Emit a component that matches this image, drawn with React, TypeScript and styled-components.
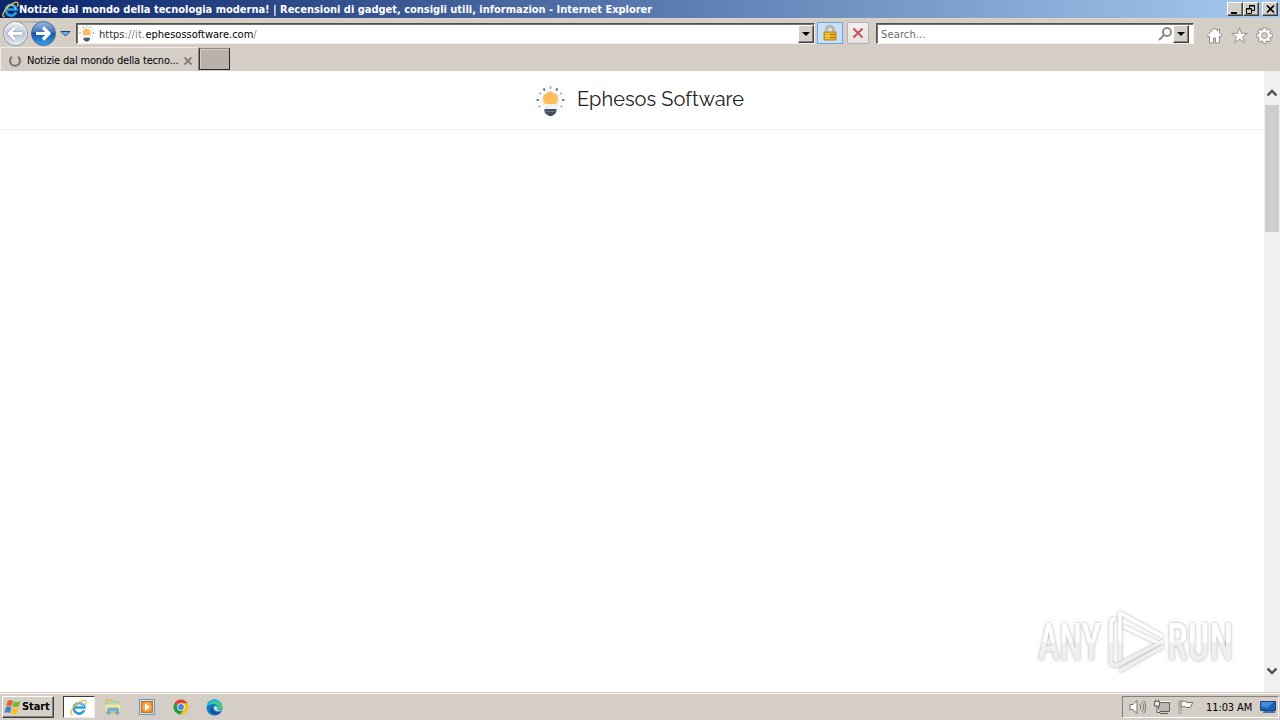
import React from "react";
import styled, { createGlobalStyle, css } from "styled-components";

const GlobalStyle = createGlobalStyle`
  html, body { margin: 0; padding: 0; overflow: hidden; background: #fff; }
  * { box-sizing: border-box; }
  svg { display: block; flex: none; }
`;

const raised = css`
  background: #d4d0c8;
  border: 1px solid;
  border-color: #fff #404040 #404040 #fff;
  box-shadow: inset -1px -1px 0 #85817b;
`;

const Screen = styled.div`
  width: 1280px;
  height: 720px;
  display: flex;
  flex-direction: column;
  background: #d5cec7;
  color: #000;
  font-family: "DejaVu Sans Condensed", "DejaVu Sans", sans-serif;
  font-stretch: condensed;
  font-size: 11px;
  overflow: hidden;
`;

const Label = styled.span<{ $spacing?: number; $bold?: boolean; $color?: string }>`
  white-space: pre;
  line-height: 14px;
  font-size: 11px;
  font-weight: ${(p) => (p.$bold ? 700 : 400)};
  letter-spacing: ${(p) => p.$spacing ?? 0}px;
  color: ${(p) => p.$color ?? "#000"};
`;

const TitleBar = styled.header`
  height: 18px;
  flex: none;
  display: flex;
  align-items: center;
  padding: 0 2px;
  background: linear-gradient(90deg, #0a246a, #a6caf0);
`;

const TitleText = styled(Label)`
  padding-top: 1px;
`;

const WindowButtons = styled.div`
  margin-left: auto;
  display: flex;
  align-items: center;
`;

const WindowButton = styled.button<{ $gap?: number }>`
  ${raised}
  width: 16px;
  height: 14px;
  padding: 0;
  margin-left: ${(p) => p.$gap ?? 0}px;
  display: flex;
  align-items: center;
  justify-content: center;
`;

const NavBar = styled.nav`
  height: 29px;
  flex: none;
  display: flex;
  align-items: flex-start;
  padding: 4px 6px 0 1px;
  border-top: 1px solid #d8d5c5;
`;

const History = styled.div`
  width: 75px;
  height: 26px;
  margin-top: -2px;
  flex: none;
`;

const Field = styled.div<{ $width: number }>`
  width: ${(p) => p.$width}px;
  height: 21px;
  flex: none;
  display: flex;
  align-items: center;
  padding-left: 2px;
  background: #fff;
  border: 1px solid;
  border-color: #55504c #f4f1ee #f4f1ee #55504c;
  box-shadow: inset 1px 1px 0 #77716c;
`;

const FieldText = styled.div<{ $indent: number }>`
  flex: 1;
  padding: 2px 0 0 ${(p) => p.$indent}px;
  display: flex;
`;

const DropButton = styled.button<{ $end?: number }>`
  ${raised}
  width: 16px;
  height: 18px;
  padding: 0;
  margin-right: ${(p) => p.$end ?? 0}px;
  display: flex;
  align-items: center;
  justify-content: center;
`;

const LockButton = styled.button`
  width: 26px;
  height: 22px;
  margin: -1px 0 0 2px;
  padding: 0;
  display: flex;
  align-items: center;
  justify-content: center;
  background: #c8e0fb;
  border: 1px solid #6ca6e0;
`;

const StopButton = styled(LockButton)`
  width: 22px;
  margin: -1px 7px 0 4px;
  background: linear-gradient(#f3f0f1, #e6e2e4);
  border: 1px solid #b8b1b3;
  border-radius: 2px;
`;

const Tools = styled.div`
  display: flex;
  gap: 8px;
  padding: 4px 0 0 12px;
`;

const TabBar = styled.div`
  height: 24px;
  flex: none;
  display: flex;
  align-items: flex-start;
`;

const Tab = styled.div`
  width: 199px;
  height: 24px;
  display: flex;
  align-items: center;
  padding: 2px 6px 0 8px;
  border-top: 1px solid #eeebe8;
  border-left: 1px solid #eeebe8;
  border-right: 1px solid #8c847d;
`;

const TabText = styled.div`
  flex: 1;
  padding-left: 6px;
  display: flex;
`;

const NewTab = styled.button`
  width: 31px;
  height: 22px;
  margin: 1px 0 0;
  padding: 0;
  background: #b9b1ab;
  border: 1px solid;
  border-color: #8e8680 #2b2825 #2b2825 #39322e;
  box-shadow: inset 1px 1px 0 #d5cec7;
`;

const Viewport = styled.main`
  height: 621px;
  flex: none;
  display: flex;
  background: #fff;
`;

const Page = styled.div`
  position: relative;
  width: 1264px;
`;

const SiteHeader = styled.div`
  height: 59px;
  margin-left: 1px;
  display: flex;
  align-items: flex-start;
  padding: 14px 0 0 535px;
  border-bottom: 1px solid #f0f0f0;
`;

const SiteName = styled.h1`
  margin: 0 0 0 11px;
  font-family: Raleway, Lato, sans-serif;
  font-size: 20px;
  line-height: 28px;
  font-weight: 400;
  letter-spacing: 0.03px;
  color: #222;
  white-space: nowrap;
`;

const Watermark = styled.div`
  position: absolute;
  right: 22px;
  bottom: 12px;
`;

const ScrollBar = styled.div`
  width: 16px;
  display: flex;
  flex-direction: column;
  align-items: center;
  justify-content: space-between;
  background: #f0f0f0;
  padding: 18px 0 17px;
`;

const Thumb = styled.div`
  width: 14px;
  height: 127px;
  margin: 8px 0 auto;
  background: #cdcdcd;
`;

const TaskBar = styled.footer`
  height: 28px;
  flex: none;
  display: flex;
  align-items: flex-start;
  padding: 3px 1px 0 2px;
  border-top: 1px solid #d5cec7;
  box-shadow: inset 0 1px 0 #f7f5f3;
`;

const StartButton = styled.button`
  ${raised}
  width: 52px;
  height: 22px;
  padding: 0 0 0 1px;
  display: flex;
  align-items: center;
  font-family: inherit;
`;

const TaskItem = styled.button<{ $active?: boolean }>`
  width: 32px;
  height: 22px;
  margin-right: 2px;
  padding: 0 1px 0 0;
  display: flex;
  align-items: center;
  justify-content: center;
  background: ${(p) => (p.$active ? "#fff" : "transparent")};
  border: 1px solid;
  border-color: ${(p) => (p.$active ? "#403c38 #eee #eee #403c38" : "transparent")};
`;

const TaskItems = styled.div`
  display: flex;
  margin-left: 9px;
`;

const Tray = styled.div`
  width: 157px;
  height: 22px;
  margin-left: auto;
  display: flex;
  align-items: center;
  padding-left: 6px;
  border: 1px solid;
  border-color: #85807a #fff #fff #85807a;
`;

const TrayIcons = styled.div`
  display: flex;
  gap: 8px;
  width: 77px;
`;

const Clock = styled.div`
  display: flex;
  width: 54px;
  padding-top: 2px;
`;

const IELogo = ({ size }: { size: number }) => (
  <svg width={size} height={size} viewBox="0 0 16 16" fill="none">
    <path d="M13.3 10.7A5 5 0 1 1 13.600 8H5" stroke="#2c9bdf" strokeWidth="2.500" />
    <path d="M12.600 7.800a4 4 0 0 0-8.200-.6" stroke="#8bdcfa" strokeWidth="1" />
    <path d="M2.4 14.8C-.9 15 1.3 9.1 6 5 10.6.8 15.4-.1 15.1 3c0 .7-.3 1.5-.7 2.3" stroke="#f1bd35" strokeWidth="1.300" />
  </svg>
);

const Bulb = ({ width, height }: { width: number; height: number }) => (
  <svg width={width} height={height} viewBox="0.500 0 30 32" fill="none">
    <path d="M8.500 24c-.3-3-3-4.600-3-9a9.500 9.500 0 0 1 19 0c0 4.400-2.700 6-3 9z" fill="#edf2f4" />
    <path d="M8 15c-1.500-3 .5-6 3-6.500 2-2.500 6-2 7.500 0 3 0 4.500 3 3.500 5.500 1 3-1.500 5.500-4.500 5h-6C9 19 7.500 17.500 8 15z" fill="#fdbd58" />
    <path d="M9 24h12v2.500l-1.500 2.500-3 2h-3l-3-2L9 27z" fill="#42505d" />
    <path d="M10 26.500h10" stroke="#6d7a85" />
    <g strokeWidth="1.700">
      <path d="M15 1v3M3.500 8l2 1M26.500 8l-2 1M3 22l2-1M27 22l-2-1" stroke="#76bbe1" />
      <path d="M8 3.500l1.300 2M22 3.500l-1.300 2M1 15h2.500M26.500 15H29" stroke="#455b6d" />
    </g>
  </svg>
);

const Arrow = () => (
  <svg width="8" height="4" viewBox="0 0 8 4"><path d="M0 0h8L4 4z" /></svg>
);

const HistoryIcons = () => (
  <svg width="75" height="28" viewBox="0 0 75 28" fill="none">
    <defs>
      <linearGradient id="back" x2="0" y2="1"><stop stopColor="#f2f5f9" /><stop offset=".5" stopColor="#bbc6d4" /><stop offset="1" stopColor="#e0eaf3" /></linearGradient>
      <linearGradient id="forward" x2="0" y2="1"><stop stopColor="#9cbce4" /><stop offset=".42" stopColor="#4778bd" /><stop offset=".5" stopColor="#1255a8" /><stop offset="1" stopColor="#3ba5ee" /></linearGradient>
    </defs>
    <path d="M14 1h28" stroke="#a19c99" />
    <circle cx="14.500" cy="12.500" r="12" fill="url(#back)" stroke="#8b9099" />
    <circle cx="42.500" cy="12.500" r="12" fill="url(#forward)" stroke="#4c6b96" />
    <circle cx="14.500" cy="12.500" r="11" stroke="#f8fbff" opacity=".7" />
    <path d="M21 12.500H9M14 6.500l-6 6 6 6" stroke="#8c9db2" strokeWidth="4" />
    <path d="M21 12.500H9M14 6.500l-6 6 6 6" stroke="#fff" strokeWidth="3" />
    <path d="M35 12.500h12M42 6.500l6 6-6 6" stroke="#fff" strokeWidth="3.200" />
    <path d="M60 10.500h9L64.500 15z" fill="#69b7e6" stroke="#164480" />
  </svg>
);

const LockIcon = () => (
  <svg width="14" height="16" viewBox="0 0 14 16" fill="none">
    <path d="M3.500 8V4.500a3.500 3.500 0 0 1 7 0V8" stroke="#a69a69" strokeWidth="2.300" />
    <path d="M3.500 8V4.500a3.500 3.500 0 0 1 7 0V8" stroke="#e4ddb9" strokeWidth=".8" />
    <path d="M1 7h12v8H1z" fill="#e4ae22" stroke="#b98711" />
    <path d="M1 9.500h12M1 12.500h12" stroke="#b7810c" /><path d="M2 8h5v6H2z" fill="#ffe260" opacity=".45" />
  </svg>
);

const SearchIcon = () => (
  <svg width="15" height="14" viewBox="0 0 15 14" fill="none" stroke="#8e8a88" strokeWidth="2"><circle cx="9" cy="5" r="4" /><path d="M6 8l-5 5" /></svg>
);

const HomeIcon = () => (
  <svg width="17" height="17" viewBox="0 0 17 17"><path d="M8.500 1L1 8.500l1.300 1.300L3.500 9v7h4v-5h2v5h4V9l1.200.8L16 8.500l-2.500-2.600V2h-2v2z" fill="#fff" stroke="#918b87" /></svg>
);

const StarIcon = () => (
  <svg width="17" height="17" viewBox="0 0 17 17"><path d="M8.500.8l1.900 5.600h5.900l-4.700 3.500 1.800 5.700-4.900-3.500-4.900 3.500 1.800-5.700L.7 6.400h5.900z" fill="#fff" stroke="#918b87" strokeWidth=".9" /></svg>
);

const gearTeeth = [0, 45, 90, 135, 180, 225, 270, 315];

const GearIcon = () => (
  <svg width="17" height="17" viewBox="0 0 17 17" fill="none">
    <g stroke="#918b87" strokeWidth="4">{gearTeeth.map((a) => <path key={a} d="M8.500.3v3" transform={`rotate(${a} 8.500 8.500)`} />)}</g>
    <circle cx="8.500" cy="8.500" r="4.500" stroke="#918b87" strokeWidth="4" />
    <g stroke="#fff" strokeWidth="2.300">{gearTeeth.map((a) => <path key={a} d="M8.500 1.100v3" transform={`rotate(${a} 8.500 8.500)`} />)}</g>
    <circle cx="8.500" cy="8.500" r="4.500" stroke="#fff" strokeWidth="2.500" />
  </svg>
);

const Chevron = ({ down }: { down?: boolean }) => (
  <svg width="10" height="8" viewBox="0 0 10 8" fill="none" stroke="#505050" strokeWidth="2.400"><path d={down ? "M.5 1.500L5 6l4.500-4.500" : "M.5 6.500L5 2l4.500 4.500"} /></svg>
);

const WatermarkSvg = styled.svg`
  overflow: visible;
`;

const AnyRun = () => (
  <WatermarkSvg width="210" height="78" viewBox="0 0 210 78" fill="none">
    <defs>
      <linearGradient id="mark" x1="0" y1="0" x2="0" y2="78" gradientUnits="userSpaceOnUse"><stop offset=".5" stopColor="#fff" /><stop offset=".53" stopColor="#efefef" /></linearGradient>
      <filter id="shade" x="-20%" y="-20%" width="140%" height="140%"><feDropShadow dx="0" dy="0" stdDeviation="1.700" floodColor="#666" floodOpacity=".6" /></filter>
    </defs>
    <g filter="url(#shade)">
      <g fill="url(#mark)" fontFamily="Roboto, sans-serif" fontWeight="500" fontSize="52">
        <text x="6" y="58" textLength="63" lengthAdjust="spacingAndGlyphs">ANY</text>
        <text x="135" y="58" textLength="66" lengthAdjust="spacingAndGlyphs">RUN</text>
      </g>
      <g stroke="url(#mark)" strokeWidth="3.600" strokeLinejoin="round" strokeLinecap="round">
        <path d="M82 17l-3 2v43l3 1" />
        <path d="M88 57V11l42 23" />
        <path d="M93 25l33 16" />
        <path d="M130 40L84 64" />
        <path d="M89 68l41-23" />
      </g>
    </g>
  </WatermarkSvg>
);

const WindowsFlag = () => (
  <svg width="18" height="18" viewBox="0 0 17 17">
    <path d="M3.500 2.500c2-1 3.500-.7 5 .1L7.200 7.800c-1.700-.8-3.300-.7-5 0z" fill="#ec6129" />
    <path d="M9.300 3c2 1 3.700 1 6.200 0l-1.600 5c-2 1-3.900.9-5.900 0z" fill="#79b833" />
    <path d="M2 8.600c1.800-.8 3.500-.7 5 .2l-1.500 5.400c-1.600-1-3.200-1-5-.2z" fill="#3f83cb" />
    <path d="M7.800 9.200c1.900 1 3.700 1.100 5.800.1l-1.400 5.300c-2 1-3.900.9-5.900-.1z" fill="#f9bd27" />
  </svg>
);

const FolderIcon = () => (
  <svg width="18" height="18" viewBox="0 0 18 18">
    <path d="M2 2h6l1.500 2H15v11H2z" fill="#e5ce78" stroke="#c2a954" strokeWidth=".7" /><path d="M4 4h9v5H4z" fill="#9edbd1" /><path d="M1.500 6.500h14.500v7.500H1.500z" fill="#f5e6a2" />
    <path d="M3.500 16V11.500q0-1.500 1.500-1.500h8q1.500 0 1.500 1.500V16h-2.300v-3H5.800v3z" fill="#73b9da" stroke="#4c91bb" strokeWidth=".6" />
  </svg>
);

const MediaIcon = () => (
  <svg width="18" height="18" viewBox="0 0 18 18"><rect x="1.500" y="1.500" width="15" height="15" fill="#cae4f4" stroke="#5799c9" /><rect x="3.500" y="3.500" width="11" height="11" fill="#ef8421" stroke="#d76e16" /><circle cx="9" cy="9" r="4.800" fill="#f7a64a" /><path d="M7 5.200l5 3.800-5 3.800z" fill="#fff" /></svg>
);

const ChromeIcon = () => (
  <svg width="16" height="16" viewBox="0 0 16 16"><circle cx="8" cy="8" r="7.500" fill="#fbc116" /><path d="M8 8L1.500 4.200A7.500 7.500 0 0 1 14.500 4.300H8z" fill="#df4133" /><path d="M1.500 4.200A7.500 7.500 0 0 0 7.500 15.500L11 9.900 8 8z" fill="#279a4d" /><circle cx="8" cy="8" r="3.700" fill="#fff" /><circle cx="8" cy="8" r="2.900" fill="#4285e8" /></svg>
);

const EdgeIcon = () => (
  <svg width="17" height="17" viewBox="0 0 17 17"><circle cx="8.500" cy="8.500" r="8" fill="#147ac6" /><path d="M.7 7C2-1.500 16.500-1.300 16.400 8c0 3.300-4.700 3.600-6 2.300 2-2.500.3-5.300-3-5.200C4.200 5 1.900 6 .7 8z" fill="#41c98d" /><path d="M.7 7C2-.6 11-1.500 14 3 9 1.500 4 3 .7 8z" fill="#28b5d3" /><path d="M7 7c-1.600 3.500 1.300 6.600 6 6l2-.5c-4.200 6-13.500 2.700-10-4z" fill="#164f9d" /><path d="M8 7.500c-.8 2 .9 4.800 4 4.800 2.200 0 3.500-.5 4.500-1.300-2 .7-4.900.3-5.600-.6.3-1 .3-2.600-.9-3.400z" fill="#d6dce0" /></svg>
);

const SpeakerIcon = () => (
  <svg width="17" height="16" viewBox="0 0 17 16" fill="none" stroke="#77716c"><path d="M1 5.500h3l4-4v13l-4-4H1z" fill="#fff" /><path d="M10.500 5c1.700 1.700 1.700 4.300 0 6M12.500 3c3 2.800 3 7.200 0 10M14.500 1.500c3 3.500 3 9.500 0 13" /></svg>
);

const NetworkIcon = () => (
  <svg width="16" height="16" viewBox="0 0 16 16" fill="none" stroke="#625d59"><path d="M4.500 3.500h10v8h-10z" stroke="#fff" strokeWidth="3" /><path d="M4.500 3.500h11v9h-11z" fill="#bbb8b6" /><path d="M6 14.500h8M1.500.5v3M4.500.5v3" /><path d="M.5 2.500h5V7h-5zM3 7v6.500h3" fill="#eee" /></svg>
);

const FlagIcon = () => (
  <svg width="17" height="16" viewBox="0 0 17 16"><path d="M2 1v14" stroke="#6c6763" strokeWidth="2.500" /><path d="M2 1v14" stroke="#fff" /><path d="M3 2.500c3-1 4.300 0 5.800 1h6l-2.500 5H8.500c-1.700-1.200-3.500-1.200-5.500-.3z" fill="#f7f5f3" stroke="#77716c" /></svg>
);

const MonitorIcon = () => (
  <svg width="16" height="14" viewBox="0 0 16 14"><path d="M.5 1.500h15v9H.5z" fill="#1761b7" stroke="#22436f" /><path d="M1 2h13L7 8 1 6z" fill="#438cdb" /><path d="M4 11h11v2H3v-1z" fill="#4274a4" /></svg>
);

export default function App() {
  return (
    <Screen>
      <GlobalStyle />
      <TitleBar>
        <IELogo size={17} />
        <TitleText $bold $color="#fff" $spacing={-0.015}>Notizie dal mondo della tecnologia moderna! | Recensioni di gadget, consigli utili, informazion - Internet Explorer</TitleText>
        <WindowButtons>
          <WindowButton><svg width="10" height="9"><path d="M1 7h6v2H1z" /></svg></WindowButton>
          <WindowButton><svg width="10" height="9" fill="none" stroke="#000"><path d="M3.500 3V.5h5v5H6M3 1h6M.5 3.500h5v5h-5zM0 4h6" /></svg></WindowButton>
          <WindowButton $gap={3}><svg width="9" height="8"><path d="M1 .5l7 7M8 .5l-7 7" stroke="#000" strokeWidth="1.600" /></svg></WindowButton>
        </WindowButtons>
      </TitleBar>
      <NavBar>
        <History><HistoryIcons /></History>
        <Field $width={739}>
          <Bulb width={16} height={17} />
          <FieldText $indent={4}>
            <Label $color="#333">https</Label><Label $color="#808080" $spacing={0.2}>://it.</Label><Label>ephesossoftware.com</Label><Label $color="#808080">/</Label>
          </FieldText>
          <DropButton aria-label="Addresses"><Arrow /></DropButton>
        </Field>
        <LockButton><LockIcon /></LockButton>
        <StopButton><svg width="12" height="12"><path d="M1.500 1.500l9 9M10.500 1.500l-9 9" stroke="#c55258" strokeWidth="2" /></svg></StopButton>
        <Field $width={318}>
          <FieldText $indent={2}><Label $color="#6d6d6d" $spacing={0.15}>Search...</Label></FieldText>
          <SearchIcon />
          <DropButton $end={4}><Arrow /></DropButton>
        </Field>
        <Tools><HomeIcon /><StarIcon /><GearIcon /></Tools>
      </NavBar>
      <TabBar>
        <Tab>
          <svg width="12" height="12" fill="none" stroke="#77726e" strokeWidth="2"><path d="M3 1.800a5 5 0 1 0 6 0" /></svg>
          <TabText><Label $spacing={-0.17}>Notizie dal mondo della tecno...</Label></TabText>
          <svg width="8" height="8"><path d="M.5.5l7 7M7.500.5l-7 7" stroke="#827b76" strokeWidth="1.800" /></svg>
        </Tab>
        <NewTab aria-label="New tab" />
      </TabBar>
      <Viewport>
        <Page>
          <SiteHeader><Bulb width={30} height={32} /><SiteName>Ephesos Software</SiteName></SiteHeader>
          <Watermark><AnyRun /></Watermark>
        </Page>
        <ScrollBar><Chevron /><Thumb /><Chevron down /></ScrollBar>
      </Viewport>
      <TaskBar>
        <StartButton><WindowsFlag /><Label $bold $spacing={-0.1}>Start</Label></StartButton>
        <TaskItems>
          <TaskItem $active><IELogo size={17} /></TaskItem>
          <TaskItem><FolderIcon /></TaskItem>
          <TaskItem><MediaIcon /></TaskItem>
          <TaskItem><ChromeIcon /></TaskItem>
          <TaskItem><EdgeIcon /></TaskItem>
        </TaskItems>
        <Tray>
          <TrayIcons><SpeakerIcon /><NetworkIcon /><FlagIcon /></TrayIcons>
          <Clock><Label $spacing={-0.1}>11:03 AM</Label></Clock>
          <MonitorIcon />
        </Tray>
      </TaskBar>
    </Screen>
  );
}
